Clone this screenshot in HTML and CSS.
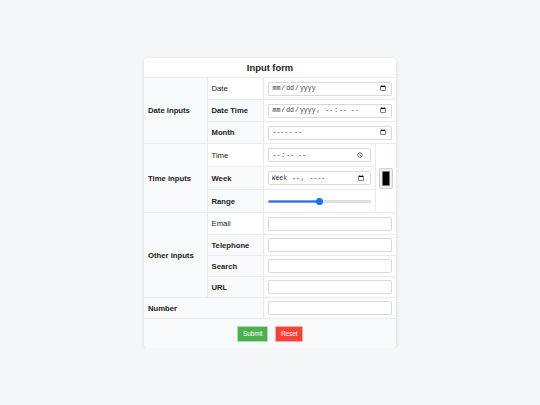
FILE: index.html
```html
<!DOCTYPE html>
<html>
<head>
<meta charset="utf-8">
<link rel="stylesheet" href="styles.css">
</head>
<body>
<div class="card">
  <table class="form-table">
    <colgroup>
      <col class="c1"><col class="c2"><col class="c3"><col class="c4">
    </colgroup>
    <thead>
      <tr><th colspan="4" class="title">Input form</th></tr>
    </thead>
    <tbody>
      <tr class="r-date">
        <th rowspan="3" class="group">Date inputs</th>
        <td class="label">Date</td>
        <td colspan="2" class="field"><input type="date" class="inp"></td>
      </tr>
      <tr class="r-date">
        <th class="label">Date Time</th>
        <td colspan="2" class="field"><input type="datetime-local" class="inp"></td>
      </tr>
      <tr class="r-date">
        <th class="label">Month</th>
        <td colspan="2" class="field"><input type="month" class="inp"></td>
      </tr>
      <tr class="r-time">
        <th rowspan="3" class="group">Time inputs</th>
        <td class="label">Time</td>
        <td class="field"><input type="time" class="inp"></td>
        <td rowspan="3" class="colorcell"><input type="color" class="color" value="#000000"></td>
      </tr>
      <tr class="r-time">
        <th class="label">Week</th>
        <td class="field"><input type="week" class="inp"></td>
      </tr>
      <tr class="r-time">
        <th class="label">Range</th>
        <td class="field"><input type="range" class="range" value="50"></td>
      </tr>
      <tr class="r-other r-first">
        <th rowspan="4" class="group">Other inputs</th>
        <td class="label">Email</td>
        <td colspan="2" class="field"><input type="email" class="inp"></td>
      </tr>
      <tr class="r-other">
        <th class="label">Telephone</th>
        <td colspan="2" class="field"><input type="tel" class="inp"></td>
      </tr>
      <tr class="r-other">
        <th class="label">Search</th>
        <td colspan="2" class="field"><input type="search" class="inp"></td>
      </tr>
      <tr class="r-other">
        <th class="label">URL</th>
        <td colspan="2" class="field"><input type="url" class="inp"></td>
      </tr>
      <tr class="r-other">
        <th colspan="2" class="group">Number</th>
        <td colspan="2" class="field"><input type="number" class="inp"></td>
      </tr>
    </tbody>
    <tfoot>
      <tr>
        <td colspan="4" class="actions">
          <div class="btns">
            <button class="btn submit" type="button">Submit</button>
            <button class="btn reset" type="button">Reset</button>
          </div>
        </td>
      </tr>
    </tfoot>
  </table>
</div>
</body>
</html>
```

FILE: styles.css
```css
html, body {
  margin: 0;
  padding: 0;
}
body {
  background: #f5f6f8;
  font-family: "Liberation Sans", Arial, sans-serif;
  color: #222;
  padding-top: 58px;
}
.card {
  width: 252px;
  margin: 0 auto;
  background: #fff;
  border-radius: 4px;
  box-shadow: 0 1px 4px rgba(0,0,0,0.12);
  overflow: hidden;
}
.form-table {
  width: 252px;
  border-collapse: collapse;
  border-style: hidden;
  table-layout: fixed;
  font-size: 7.7px;
}
.c1 { width: 63px; }
.c2 { width: 56px; }
.c3 { width: 112px; }
.c4 { width: 21px; }
.form-table th, .form-table td {
  border: 1px solid #e9ebee;
  padding: 0 4px;
  text-align: left;
  vertical-align: middle;
}
.r-date > * { height: 21px; }
.r-time > * { height: 22px; }
.r-other > * { height: 20px; }
.r-first > * { height: 21px; }
.form-table th {
  background: #f9fafb;
  font-weight: bold;
}
.form-table td.label {
  background: #fff;
  font-weight: normal;
}
.form-table th.title {
  background: #fff;
  text-align: center;
  font-size: 9.4px;
  height: 19px;
}
.field {
  background: #fff;
}
.inp {
  box-sizing: border-box;
  width: 100%;
  height: 14px;
  margin: 0;
  padding: 0 3px;
  border: 1px solid #d6d9dd;
  border-radius: 2px;
  font-family: "Liberation Mono", monospace;
  font-size: 6.5px;
  color: #333;
  background: #fff;
  display: block;
}
.range {
  -webkit-appearance: none;
  appearance: none;
  display: block;
  width: 100%;
  margin: 0;
  height: 8px;
  background: transparent;
}
.range::-webkit-slider-runnable-track {
  height: 3px;
  border-radius: 2px;
  background: linear-gradient(to right, #1a73e8 0 50%, #e6e6e6 50% 100%);
  box-shadow: inset 0 0 0 0.5px #cfcfcf;
}
.range::-webkit-slider-thumb {
  -webkit-appearance: none;
  appearance: none;
  width: 7px;
  height: 7px;
  margin-top: -2px;
  border-radius: 50%;
  background: #1a73e8;
  border: none;
}
.colorcell {
  background: #fff;
  padding: 0 !important;
}
.color {
  -webkit-appearance: none;
  appearance: none;
  box-sizing: border-box;
  width: 14px;
  height: 21px;
  padding: 2px;
  margin: 0 auto;
  display: block;
  border: 1px solid #cfd2d6;
  border-radius: 2px;
  background: #efefef;
  cursor: pointer;
}
.color::-webkit-color-swatch-wrapper {
  padding: 0;
}
.color::-webkit-color-swatch {
  border: 1px solid #777;
  border-radius: 1px;
}
.actions {
  background: #f9fafb;
  height: 29px;
}
.btns {
  display: flex;
  justify-content: center;
  gap: 7px;
}
.btn {
  font-family: "Liberation Sans", Arial, sans-serif;
  font-size: 6.3px;
  color: #fff;
  height: 16px;
  padding: 0 5px;
  border: 1px solid rgba(255,255,255,0.55);
  border-radius: 1px;
  margin: 0;
  cursor: pointer;
}
.submit { background: #4caf50; width: 31px; }
.reset { background: #f44336; width: 28px; }
```
